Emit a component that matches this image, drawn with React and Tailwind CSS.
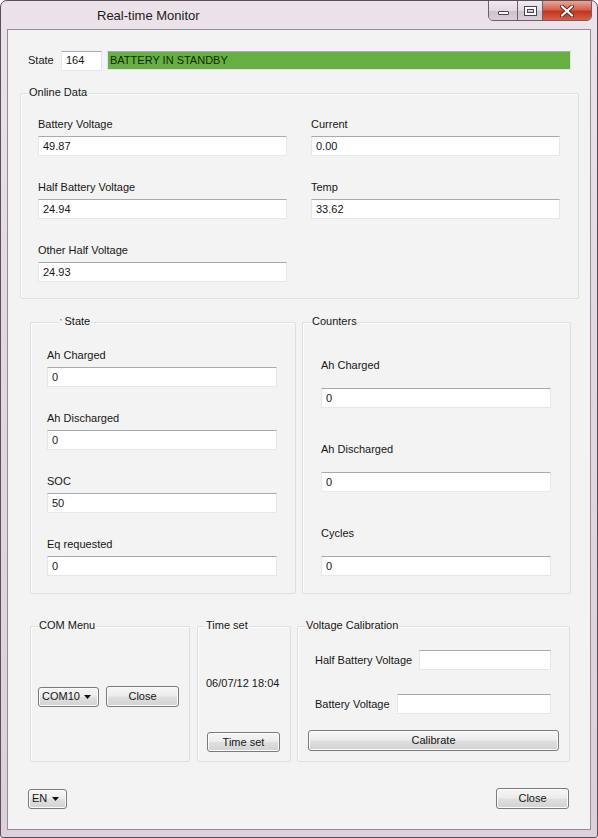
import React from 'react';

const btnBg =
  'bg-[linear-gradient(to_bottom,#f6f6f6_0%,#ececec_48%,#dfdfdf_52%,#d2d2d2_100%)] border border-[#7a7a7a] rounded-[3px] shadow-[inset_0_0_0_1px_#fbfbfb]';

function TextBox({ value, className = '' }) {
  return (
    <div
      className={`h-[20px] bg-white border border-[#e4e8ec] border-t-[#a6abb0] pl-[4px] flex items-center text-[11px] leading-[13px] text-[#161616] ${className}`}
    >
      {value}
    </div>
  );
}

function Field({ label, value, gap = 'mt-[5px]', width = 'w-[230px]' }) {
  return (
    <div className="flex flex-col">
      <span className="h-[13px] text-[11px] leading-[13px] text-[#161616]">{label}</span>
      <TextBox value={value} className={`${gap} ${width}`} />
    </div>
  );
}

function Group({ title, titleOffset = 'left-[7px]', className = '', children }) {
  return (
    <div className={`relative border border-[#dfdfdf] rounded-[2px] shadow-[inset_1px_1px_0_#fdfdfd] ${className}`}>
      <span
        className={`absolute -top-[8px] ${titleOffset} px-[1px] bg-[#f3f3f3] text-[11px] leading-[13px] text-[#161616]`}
      >
        {title}
      </span>
      {children}
    </div>
  );
}

function Button({ children, className = '' }) {
  return (
    <div className={`${btnBg} flex items-center justify-center text-[11px] leading-[13px] text-[#161616] ${className}`}>
      {children}
    </div>
  );
}

function Combo({ value, className = '' }) {
  return (
    <div className={`${btnBg} flex items-center justify-between pl-[3px] pr-[7px] text-[11px] leading-[13px] text-[#161616] ${className}`}>
      <span>{value}</span>
      <svg width="7" height="4" viewBox="0 0 7 4">
        <path d="M0 0 L7 0 L3.5 4 Z" fill="#111" />
      </svg>
    </div>
  );
}

export default function App() {
  return (
    <div className="w-[598px] h-[838px] flex flex-col bg-[linear-gradient(to_bottom,#ece3ea_0%,#e3d8e1_40%,#ddd0da_100%)] border border-[#5a505c] rounded-t-[7px] rounded-b-[3px] font-['Liberation_Sans',Arial,sans-serif] overflow-hidden">
      {/* title bar */}
      <div className="h-[28px] flex items-start shrink-0">
        <span className="mt-[7px] ml-[96px] text-[13px] leading-[15px] text-[#1b1b1b]">Real-time Monitor</span>
        <div className="ml-auto mr-[5px] -mt-px flex h-[21px] border border-[#6a5f6b] rounded-b-[5px] overflow-hidden">
          <div className="w-[29px] flex items-center justify-center bg-[linear-gradient(to_bottom,#f1eaf0_0%,#e2d8e0_50%,#cfc3cd_55%,#d9ced7_100%)] border-r border-[#6a5f6b]">
            <div className="mt-[5px] w-[11px] h-[4px] bg-white border border-[#4a4250] rounded-[1px]" />
          </div>
          <div className="w-[25px] flex items-center justify-center bg-[linear-gradient(to_bottom,#f1eaf0_0%,#e2d8e0_50%,#cfc3cd_55%,#d9ced7_100%)] border-r border-[#6a5f6b]">
            <div className="w-[11px] h-[8px] border-[2px] border-white outline outline-1 outline-[#4a4250] shadow-[inset_0_0_0_1px_#4a4250]" />
          </div>
          <div className="w-[48px] flex items-center justify-center bg-[linear-gradient(to_bottom,#eaa598_0%,#d8604f_45%,#c2361f_55%,#d4604a_100%)]">
            <svg width="14" height="12" viewBox="0 0 14 12">
              <path d="M2 1.5 L12 10.5 M12 1.5 L2 10.5" stroke="#5a2a24" strokeWidth="4" strokeLinecap="round" />
              <path d="M2 1.5 L12 10.5 M12 1.5 L2 10.5" stroke="#ffffff" strokeWidth="2.2" strokeLinecap="round" />
            </svg>
          </div>
        </div>
      </div>

      {/* client area */}
      <div className="mx-[6px] mb-[7px] flex-1 flex flex-col border border-[#958c98] bg-[#f3f3f3]">
        {/* state row */}
        <div className="mt-[21px] ml-[20px] flex items-center h-[19px]">
          <span className="w-[33px] text-[11px] leading-[13px] text-[#161616]">State</span>
          <TextBox value="164" className="w-[41px] h-[19px]" />
          <div className="ml-[5px] w-[464px] h-[19px] border border-[#dfe3e6] border-t-[#a8aeb2] bg-[#66b043] pl-[2px] flex items-center text-[11px] leading-[13px] text-[#14280a]">
            BATTERY IN STANDBY
          </div>
        </div>

        {/* online data */}
        <Group title="Online Data" className="mt-[23px] ml-[12px] w-[559px]">
          <div className="pt-[24px] pl-[17px] pr-[18px] pb-[16px] flex gap-[24px]">
            <div className="flex flex-col gap-[25px]">
              <Field label="Battery Voltage" value="49.87" width="w-[249px]" />
              <Field label="Half Battery Voltage" value="24.94" width="w-[249px]" />
              <Field label="Other Half Voltage" value="24.93" width="w-[249px]" />
            </div>
            <div className="flex flex-col gap-[25px]">
              <Field label="Current" value="0.00" width="w-[249px]" />
              <Field label="Temp" value="33.62" width="w-[249px]" />
            </div>
          </div>
        </Group>

        {/* state / counters */}
        <div className="mt-[23px] ml-[22px] flex gap-[6px]">
          <Group
            title={
              <span>
                <span className="text-[8px] align-top mr-[3px]">'</span>State
              </span>
            }
            titleOffset="left-[28px]"
            className="w-[266px]"
          >
            <div className="pt-[26px] pl-[16px] pr-[18px] pb-[17px] flex flex-col gap-[25px]">
              <Field label="Ah Charged" value="0" />
              <Field label="Ah Discharged" value="0" />
              <Field label="SOC" value="50" />
              <Field label="Eq requested" value="0" />
            </div>
          </Group>
          <Group title="Counters" titleOffset="left-[8px]" className="w-[269px]">
            <div className="pt-[36px] pl-[18px] pr-[19px] pb-[17px] flex flex-col gap-[35px]">
              <Field label="Ah Charged" value="0" gap="mt-[16px]" />
              <Field label="Ah Discharged" value="0" gap="mt-[16px]" />
              <Field label="Cycles" value="0" gap="mt-[16px]" />
            </div>
          </Group>
        </div>

        {/* bottom groups */}
        <div className="mt-[32px] ml-[22px] flex h-[136px]">
          <Group title="COM Menu" className="w-[160px]">
            <div className="pt-[59px] pl-[7px] flex items-center gap-[7px]">
              <Combo value="COM10" className="w-[61px] h-[20px]" />
              <Button className="w-[73px] h-[21px]">Close</Button>
            </div>
          </Group>
          <Group title="Time set" className="ml-[7px] w-[94px]">
            <div className="pt-[50px] pl-[8px] flex flex-col">
              <span className="h-[13px] text-[11px] leading-[13px] text-[#161616]">06/07/12 18:04</span>
              <Button className="mt-[42px] ml-px w-[73px] h-[20px]">Time set</Button>
            </div>
          </Group>
          <Group title="Voltage Calibration" className="ml-[6px] w-[273px]">
            <div className="pt-[23px] flex flex-col">
              <div className="pl-[17px] pr-[18px] flex items-center justify-between">
                <span className="text-[11px] leading-[13px] text-[#161616]">Half Battery Voltage</span>
                <TextBox value="" className="w-[132px]" />
              </div>
              <div className="mt-[24px] pl-[17px] pr-[18px] flex items-center justify-between">
                <span className="text-[11px] leading-[13px] text-[#161616]">Battery Voltage</span>
                <TextBox value="" className="w-[154px]" />
              </div>
              <Button className="mt-[16px] ml-[10px] w-[251px] h-[21px]">Calibrate</Button>
            </div>
          </Group>
        </div>

        {/* footer */}
        <div className="mt-[26px] ml-[20px] mr-[21px] flex items-center justify-between">
          <Combo value="EN" className="w-[39px] h-[20px]" />
          <Button className="w-[73px] h-[21px]">Close</Button>
        </div>
      </div>
    </div>
  );
}
